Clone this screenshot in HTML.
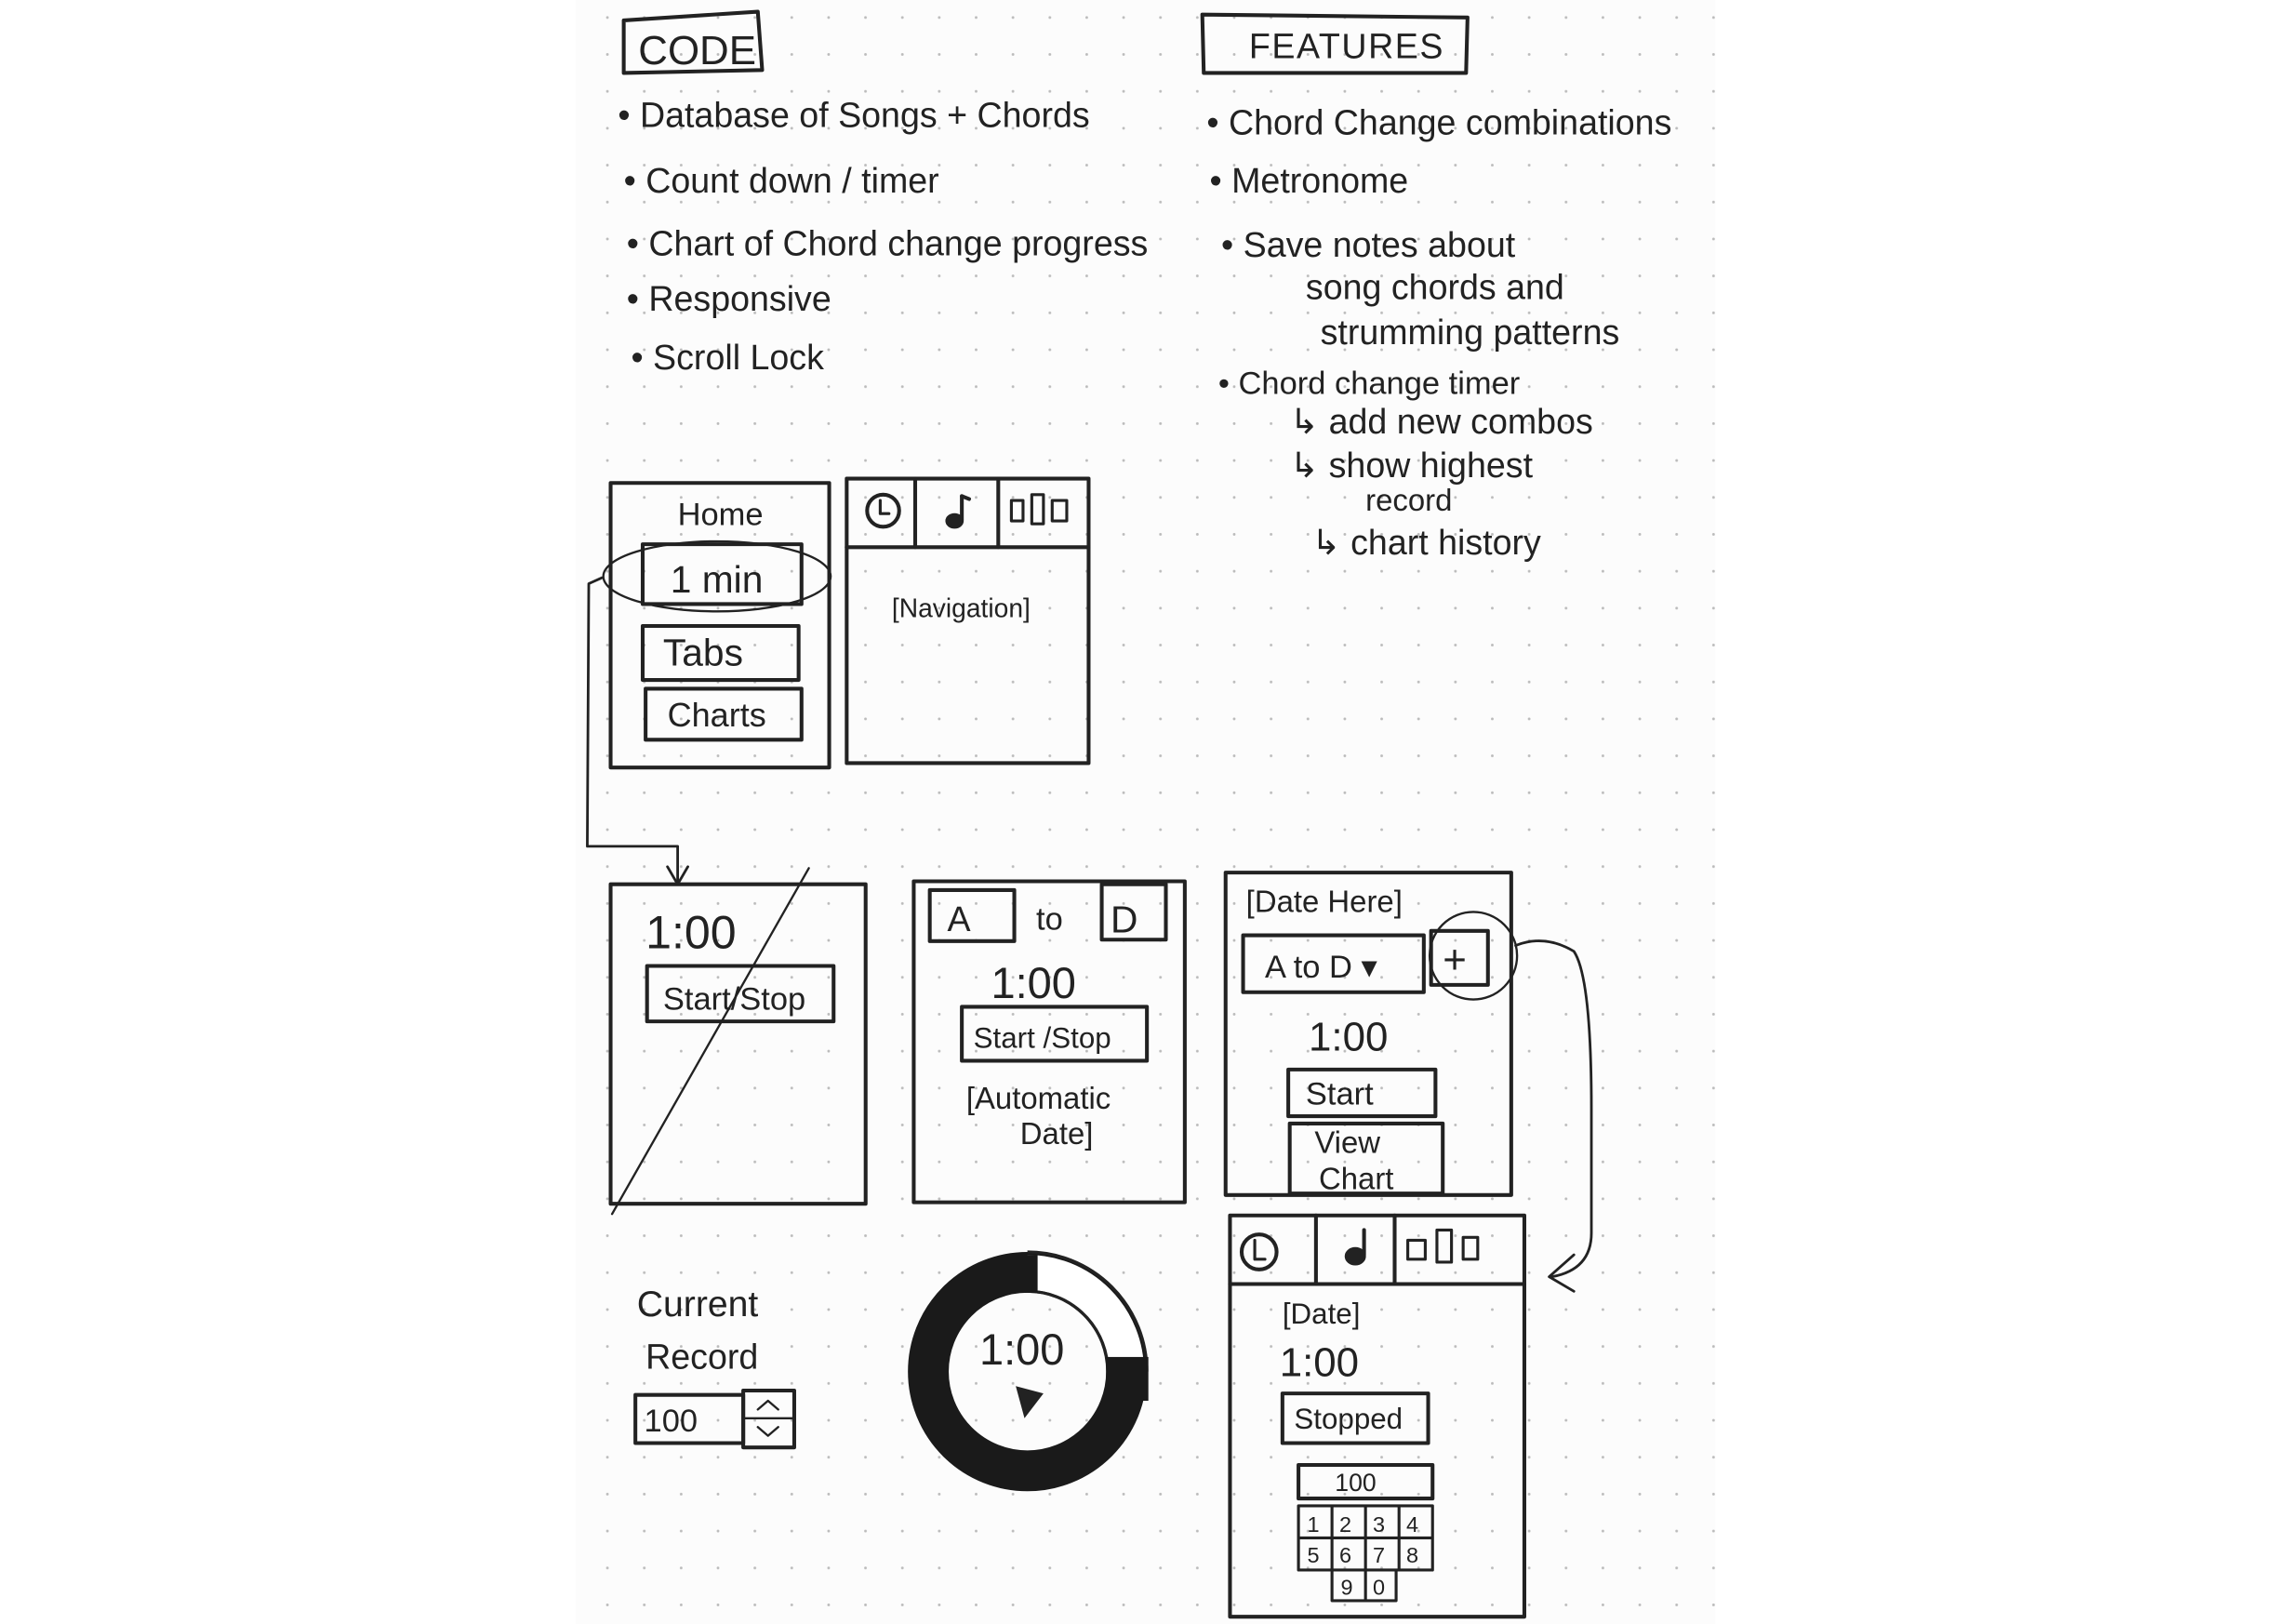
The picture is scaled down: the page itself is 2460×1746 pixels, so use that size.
<!DOCTYPE html>
<html><head><meta charset="utf-8"><style>
html,body{margin:0;padding:0;background:#fff;}
svg{display:block;}
text{font-family:"Liberation Sans",sans-serif;fill:#222;}
</style></head><body>
<svg width="2460" height="1746" viewBox="0 0 1570 1113" preserveAspectRatio="none" xmlns="http://www.w3.org/2000/svg">
<defs>
<pattern id="dots" x="0" y="0" width="25.3" height="25.3" patternUnits="userSpaceOnUse">
<circle cx="12" cy="12" r="0.9" fill="#bbb"/>
</pattern>
</defs>
<rect x="0" y="0" width="1570" height="1113" fill="#fff"/>
<rect x="395" y="0" width="782" height="1113" fill="#fcfcfc"/>
<rect x="395" y="0" width="782" height="1113" fill="url(#dots)"/>
<g fill="none" stroke="#222" stroke-width="2.6" stroke-linejoin="round" stroke-linecap="round">
<path d="M428 14 L520 8 L523 48 L428 50 Z"/>
<path d="M825 10 L1007 12 L1006 50 L826 50 Z"/>
<rect x="419" y="331" width="150" height="195"/>
<rect x="441" y="373" width="109" height="41"/>
<ellipse cx="492" cy="395" rx="78" ry="24" stroke-width="1.5"/>
<rect x="441" y="429" width="107" height="37"/>
<rect x="443" y="472" width="107" height="35"/>
<rect x="581" y="328" width="166" height="195"/>
<line x1="581" y1="375" x2="747" y2="375"/>
<line x1="628" y1="328" x2="628" y2="375"/>
<line x1="685" y1="328" x2="685" y2="375"/>
<circle cx="606" cy="350" r="11"/>
<path d="M604 343 L604 352 L610 352" stroke-width="2"/>
<path d="M660 340 L660 356" /><ellipse cx="655" cy="357" rx="5" ry="4" fill="#222"/><path d="M660 340 L665 342"/>
<rect x="694" y="343" width="8" height="14" stroke-width="2"/><rect x="708" y="339" width="8" height="20" stroke-width="2"/><rect x="722" y="343" width="10" height="14" stroke-width="2"/>
<path d="M413 396 L404 400 L403 580 L465 580 L465 605" stroke-width="1.8"/>
<path d="M458 594 L465 606 L472 594" stroke-width="1.8"/>
<rect x="419" y="606" width="175" height="219"/>
<rect x="444" y="662" width="128" height="38"/>
<line x1="555" y1="595" x2="420" y2="832" stroke-width="1.5"/>
<rect x="627" y="604" width="186" height="220"/>
<rect x="638" y="610" width="58" height="35"/>
<rect x="756" y="606" width="44" height="38"/>
<rect x="660" y="690" width="127" height="37"/>
<rect x="841" y="598" width="196" height="221"/>
<rect x="853" y="641" width="124" height="39"/>
<rect x="982" y="638" width="39" height="37"/>
<circle cx="1011" cy="655" r="30" stroke-width="1.5"/>
<rect x="884" y="733" width="101" height="32"/>
<rect x="885" y="770" width="105" height="48"/>
<path d="M1040 648 Q1060 640 1080 652 Q1092 670 1092 760 L1092 845 Q1092 870 1065 875" stroke-width="1.8"/>
<path d="M1080 860 L1063 875 L1080 885" stroke-width="1.8"/>
<rect x="844" y="833" width="202" height="275"/>
<line x1="844" y1="880" x2="1046" y2="880"/>
<line x1="903" y1="833" x2="903" y2="880"/>
<line x1="957" y1="833" x2="957" y2="880"/>
<circle cx="864" cy="858" r="12"/>
<path d="M861 850 L861 863 L868 863" stroke-width="2"/>
<path d="M936 843 L936 860"/><ellipse cx="930" cy="861" rx="6" ry="5" fill="#222"/>
<rect x="966" y="850" width="12" height="13" stroke-width="2"/><rect x="986" y="843" width="10" height="22" stroke-width="2"/><rect x="1004" y="848" width="10" height="15" stroke-width="2"/>
<rect x="880" y="955" width="100" height="34"/>
<rect x="891" y="1004" width="92" height="23"/>
<path d="M891 1032 L983 1032 L983 1076 L891 1076 Z M914 1032 L914 1076 M937 1032 L937 1097 M960 1032 L960 1076 M891 1054 L983 1054 M914 1076 L914 1097 L958 1097 L958 1076" stroke-width="2"/>
<rect x="436" y="956" width="74" height="33"/>
<rect x="510" y="953" width="35" height="39"/>
<line x1="510" y1="972" x2="545" y2="972" stroke-width="1.5"/>
<path d="M520 966 L527 960 L534 966 M520 978 L527 984 L534 978" stroke-width="1.5"/>
</g>
<circle cx="705" cy="940" r="68" fill="none" stroke="#1a1a1a" stroke-width="28"/>
<path d="M705 872 A68 68 0 0 1 773 940" fill="none" stroke="#fff" stroke-width="24"/>
<path d="M705 858 A82 82 0 0 1 787 940 M705 885 A55 55 0 0 1 760 935" fill="none" stroke="#222" stroke-width="2"/>
<rect x="759" y="930" width="29" height="30" fill="#1a1a1a"/>
<rect x="700" y="860" width="12" height="26" fill="#1a1a1a"/>
<path d="M697 950 L716 955 L703 972 Z" fill="#222"/>
<text x="672" y="935" font-size="30">1:00</text>
<text x="438" y="44" font-size="28">CODE</text>
<text x="857" y="40" font-size="24" letter-spacing="1">FEATURES</text>
<g font-size="24">
<text x="424" y="87">• Database of Songs  + Chords</text>
<text x="428" y="132">• Count down / timer</text>
<text x="430" y="175">• Chart of Chord change progress</text>
<text x="430" y="213">• Responsive</text>
<text x="433" y="253">• Scroll Lock</text>
<text x="828" y="92">• Chord  Change  combinations</text>
<text x="830" y="132">• Metronome</text>
<text x="838" y="176">• Save  notes  about</text>
<text x="896" y="205">song  chords  and</text>
<text x="906" y="236">strumming  patterns</text>
<text x="836" y="270" font-size="22">• Chord change timer</text>
<text x="885" y="297">↳ add new combos</text>
<text x="885" y="327">↳ show highest</text>
<text x="937" y="350" font-size="21">record</text>
<text x="900" y="380">↳ chart history</text>
<text x="465" y="360" font-size="22">Home</text>
<text x="460" y="406" font-size="26">1 min</text>
<text x="455" y="456" font-size="26">Tabs</text>
<text x="458" y="498" font-size="23">Charts</text>
<text x="612" y="423" font-size="18">[Navigation]</text>
<text x="443" y="650" font-size="32">1:00</text>
<text x="455" y="692" font-size="22">Start/Stop</text>
<text x="650" y="638" font-size="24">A</text>
<text x="711" y="637" font-size="22">to</text>
<text x="762" y="639" font-size="26">D</text>
<text x="680" y="684" font-size="30">1:00</text>
<text x="668" y="718" font-size="20">Start /Stop</text>
<text x="663" y="760" font-size="21">[Automatic</text>
<text x="700" y="784" font-size="21">Date]</text>
<text x="855" y="625" font-size="21">[Date Here]</text>
<text x="868" y="670" font-size="22">A to D ▾</text>
<text x="990" y="667" font-size="28">+</text>
<text x="898" y="720" font-size="28">1:00</text>
<text x="896" y="757" font-size="22">Start</text>
<text x="902" y="790" font-size="21">View</text>
<text x="905" y="815" font-size="21">Chart</text>
<text x="880" y="907" font-size="20">[Date]</text>
<text x="878" y="943" font-size="28">1:00</text>
<text x="888" y="979" font-size="20">Stopped</text>
<text x="916" y="1022" font-size="17">100</text>
<g font-size="15"><text x="897" y="1050">1</text><text x="919" y="1050">2</text><text x="942" y="1050">3</text><text x="965" y="1050">4</text>
<text x="897" y="1071">5</text><text x="919" y="1071">6</text><text x="942" y="1071">7</text><text x="965" y="1071">8</text>
<text x="920" y="1093">9</text><text x="942" y="1093">0</text></g>
<text x="437" y="902" font-size="25">Current</text>
<text x="443" y="938" font-size="24">Record</text>
<text x="442" y="981" font-size="22">100</text>
</g>
</svg>
</body></html>
